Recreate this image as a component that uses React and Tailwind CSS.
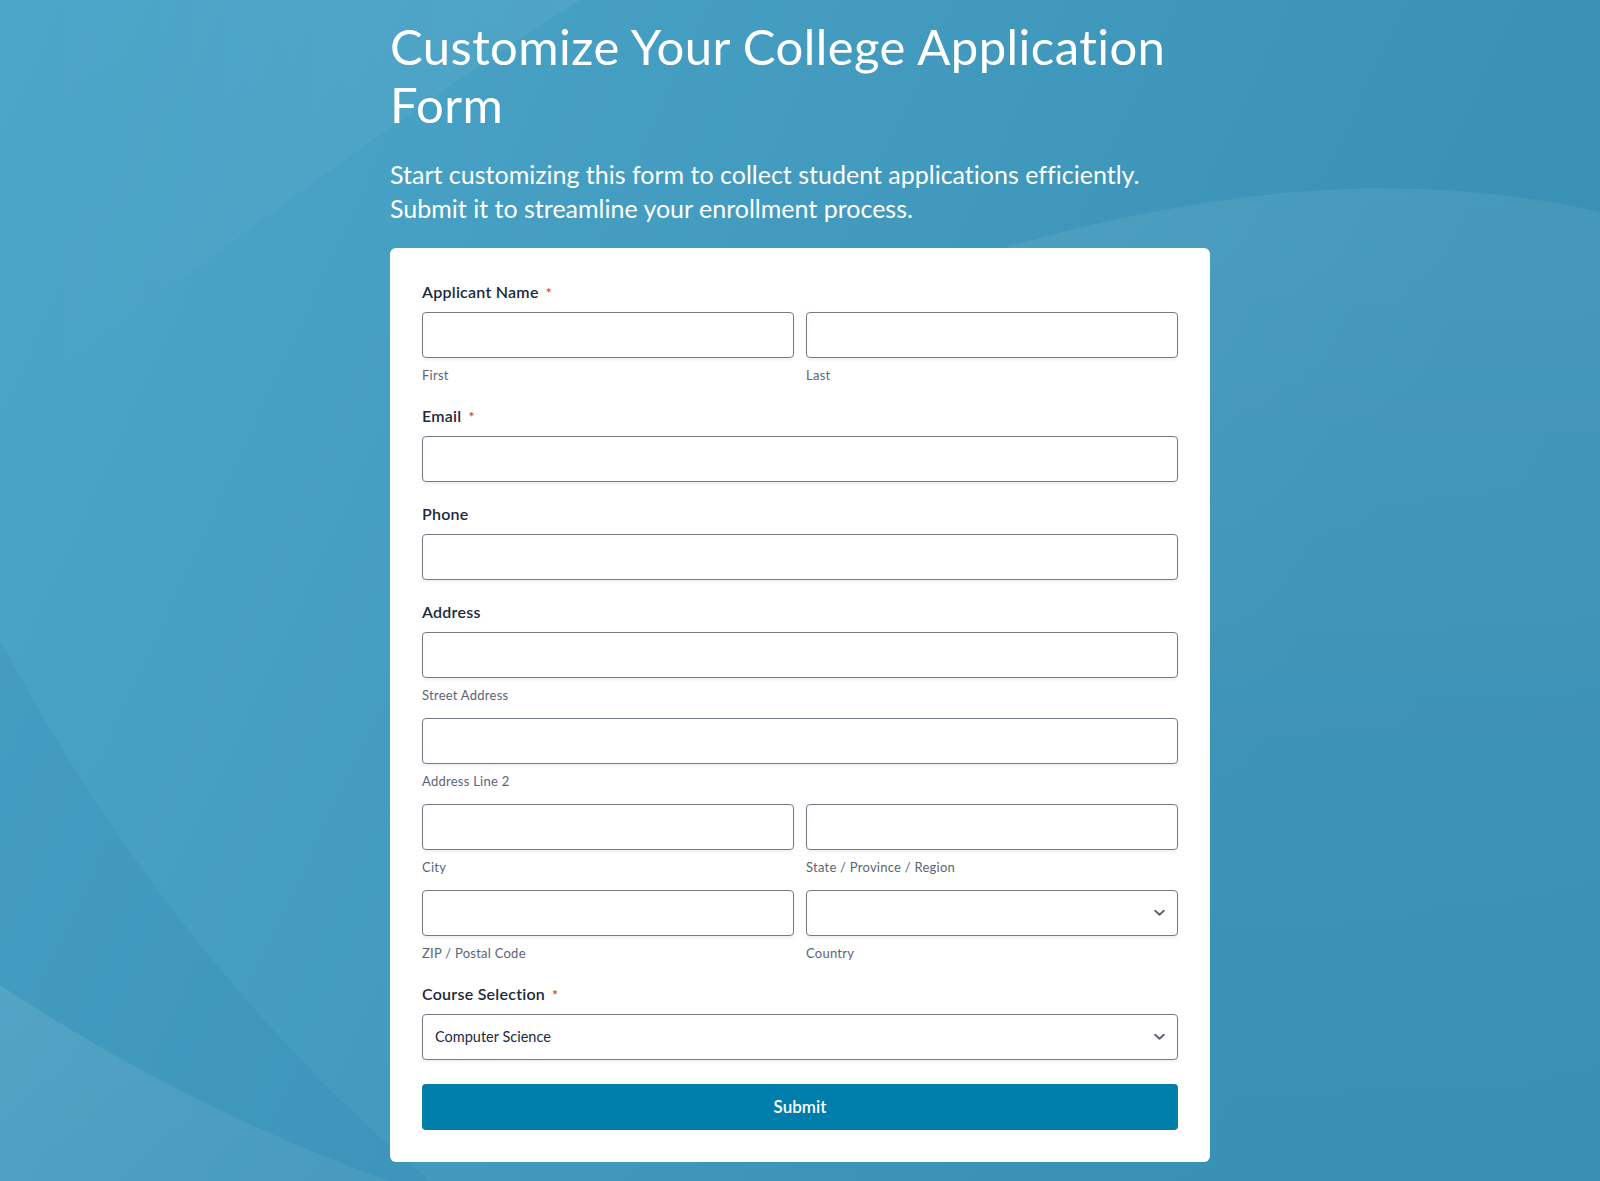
import React from "react";

function Label({ children, required }) {
  return (
    <div className="flex items-center text-[16px] leading-6 font-semibold tracking-[0.25px] text-[#1b2a40]">
      <span>{children}</span>
      {required && <span className="ml-[7px] mt-[2px] text-[14px] leading-[14px] text-[#d9412c]">*</span>}
    </div>
  );
}

function Input({ className = "", children }) {
  return (
    <div
      className={
        "relative flex h-[46px] items-center rounded-[4px] border border-[#737a8a] bg-white shadow-[0_2px_3px_rgba(30,40,60,0.07)] " +
        className
      }
    >
      {children}
    </div>
  );
}

function Sub({ children }) {
  return <div className="mt-2 text-[13px] leading-[18px] tracking-[0.25px] text-[#5a6478]">{children}</div>;
}

function Chevron() {
  return (
    <svg width="11" height="7" viewBox="0 0 11 7" className="absolute right-[12px] top-1/2 -translate-y-1/2">
      <path d="M1.2 1.2 L5.5 5.3 L9.8 1.2" fill="none" stroke="#5b6477" strokeWidth="1.9" strokeLinecap="round" strokeLinejoin="round" />
    </svg>
  );
}

export default function App() {
  return (
    <div className="relative min-h-[1181px] w-full overflow-hidden bg-[linear-gradient(115deg,#4ba6c9_0%,#439cc0_40%,#3991b6_75%,#3890b5_100%)] font-[Lato,'Noto_Sans',sans-serif] [font-variant-ligatures:none]">
      <svg
        className="pointer-events-none absolute inset-0 h-full w-full"
        viewBox="0 0 1600 1181"
        preserveAspectRatio="none"
      >
        <defs>
          <linearGradient id="tr" x1="0" y1="0" x2="0" y2="1">
            <stop offset="0" stopColor="#ffffff" stopOpacity="0.07" />
            <stop offset="0.6" stopColor="#ffffff" stopOpacity="0.02" />
            <stop offset="1" stopColor="#ffffff" stopOpacity="0" />
          </linearGradient>
          <linearGradient id="bl" x1="0" y1="0" x2="1" y2="1">
            <stop offset="0" stopColor="#ffffff" stopOpacity="0.09" />
            <stop offset="1" stopColor="#ffffff" stopOpacity="0.05" />
          </linearGradient>
          <linearGradient id="tl" x1="0" y1="0" x2="1" y2="0">
            <stop offset="0" stopColor="#ffffff" stopOpacity="0" />
            <stop offset="1" stopColor="#ffffff" stopOpacity="0.05" />
          </linearGradient>
        </defs>
        <path d="M 990 252 Q 1330 150 1600 212 L 1600 1181 L 990 1181 Z" fill="url(#tr)" />
        <path d="M 0 640 Q 170 960 430 1181 L 0 1181 Z" fill="#0d5f86" fillOpacity="0.08" />
        <path d="M 0 985 Q 190 1110 390 1181 L 0 1181 Z" fill="url(#bl)" />
        <path d="M 0 0 L 580 0 Q 330 160 0 420 Z" fill="url(#tl)" />
      </svg>

      <div className="relative mx-auto w-[820px] pt-[18px] pb-[19px]">
        <h1 className="whitespace-nowrap text-[49px] leading-[57.6px] font-normal tracking-[0.45px] text-white">
          Customize Your College Application
          <br />
          Form
        </h1>
        <p className="mt-6 whitespace-nowrap text-[25px] leading-[34px] font-normal text-white">
          Start customizing this form to collect student applications efficiently.
          <br />
          Submit it to streamline your enrollment process.
        </p>

        <div className="mt-[23px] flex flex-col gap-5 rounded-[6px] bg-white px-8 pt-8 pb-8">
          <div>
            <Label required>Applicant Name</Label>
            <div className="mt-2 grid grid-cols-2 gap-x-3">
              <div>
                <Input />
                <Sub>First</Sub>
              </div>
              <div>
                <Input />
                <Sub>Last</Sub>
              </div>
            </div>
          </div>

          <div>
            <Label required>Email</Label>
            <div className="mt-2">
              <Input />
            </div>
          </div>

          <div>
            <Label>Phone</Label>
            <div className="mt-2">
              <Input />
            </div>
          </div>

          <div>
            <Label>Address</Label>
            <div className="mt-2 flex flex-col gap-[14px]">
              <div>
                <Input />
                <Sub>Street Address</Sub>
              </div>
              <div>
                <Input />
                <Sub>Address Line 2</Sub>
              </div>
              <div className="grid grid-cols-2 gap-x-3">
                <div>
                  <Input />
                  <Sub>City</Sub>
                </div>
                <div>
                  <Input />
                  <Sub>State / Province / Region</Sub>
                </div>
              </div>
              <div className="grid grid-cols-2 gap-x-3">
                <div>
                  <Input />
                  <Sub>ZIP / Postal Code</Sub>
                </div>
                <div>
                  <Input>
                    <Chevron />
                  </Input>
                  <Sub>Country</Sub>
                </div>
              </div>
            </div>
          </div>

          <div>
            <Label required>Course Selection</Label>
            <div className="mt-2">
              <Input className="px-3">
                <span className="text-[14.5px] leading-5 text-[#1b2a40]">Computer Science</span>
                <Chevron />
              </Input>
            </div>
            <button className="mt-6 flex h-[46px] w-full items-center justify-center rounded-[4px] bg-[#007eab] text-[17px] font-semibold text-white">
              Submit
            </button>
          </div>
        </div>
      </div>
    </div>
  );
}
